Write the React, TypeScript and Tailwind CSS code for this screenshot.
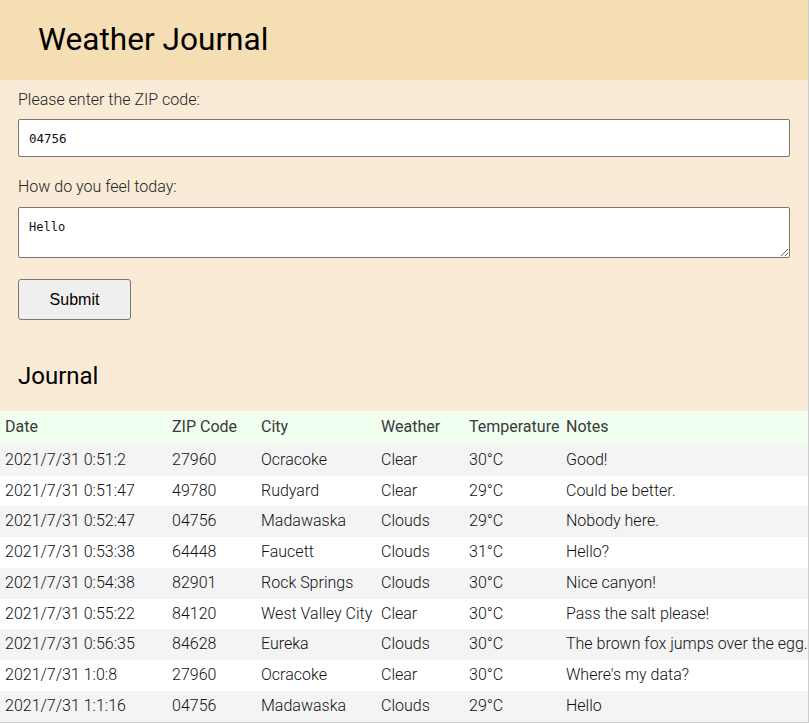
import { useState } from "react"

type Entry = {
  date: string
  zip: string
  city: string
  weather: string
  temp: string
  notes: string
}

const entries: Entry[] = [
  { date: "2021/7/31 0:51:2", zip: "27960", city: "Ocracoke", weather: "Clear", temp: "30°C", notes: "Good!" },
  { date: "2021/7/31 0:51:47", zip: "49780", city: "Rudyard", weather: "Clear", temp: "29°C", notes: "Could be better." },
  { date: "2021/7/31 0:52:47", zip: "04756", city: "Madawaska", weather: "Clouds", temp: "29°C", notes: "Nobody here." },
  { date: "2021/7/31 0:53:38", zip: "64448", city: "Faucett", weather: "Clouds", temp: "31°C", notes: "Hello?" },
  { date: "2021/7/31 0:54:38", zip: "82901", city: "Rock Springs", weather: "Clouds", temp: "30°C", notes: "Nice canyon!" },
  { date: "2021/7/31 0:55:22", zip: "84120", city: "West Valley City", weather: "Clear", temp: "30°C", notes: "Pass the salt please!" },
  { date: "2021/7/31 0:56:35", zip: "84628", city: "Eureka", weather: "Clouds", temp: "30°C", notes: "The brown fox jumps over the egg." },
  { date: "2021/7/31 1:0:8", zip: "27960", city: "Ocracoke", weather: "Clear", temp: "30°C", notes: "Where's my data?" },
  { date: "2021/7/31 1:1:16", zip: "04756", city: "Madawaska", weather: "Clouds", temp: "29°C", notes: "Hello" },
]

const cell = "px-[5px] py-[6px] text-left align-middle leading-[18.75px] whitespace-nowrap"
const head = "px-[5px] pt-[7px] pb-[8px] text-left align-middle leading-[18.75px] whitespace-nowrap font-normal"

export default function App() {
  const [zip, setZip] = useState("04756")
  const [feel, setFeel] = useState("Hello")

  return (
    <div className="min-h-screen w-full bg-white font-['Roboto',sans-serif] text-[16px]">
      <div className="w-[809px] border-r border-b-[3px] border-[#cccccc]">
        {/* Header */}
        <header className="h-[80px] bg-[#f5deb3] px-[38px] pt-[21px]">
          <h1 className="text-[31.6px] leading-[37px] font-normal text-black">Weather Journal</h1>
        </header>

        {/* Form */}
        <section className="bg-[#faebd7] px-[18px] pt-[10px] pb-[21px]">
          <label className="block leading-[19px] font-light text-[#222]">Please enter the ZIP code:</label>
          <input
            value={zip}
            onChange={(e) => setZip(e.target.value)}
            className="mt-[10px] block h-[38px] w-full rounded-[2px] border border-[#767676] bg-white px-[10px] font-['DejaVu_Sans_Mono',monospace] text-[12.5px] text-[#111] outline-none"
          />
          <label className="mt-[20px] block leading-[19px] font-light text-[#222]">How do you feel today:</label>
          <textarea
            value={feel}
            onChange={(e) => setFeel(e.target.value)}
            className="mt-[11px] block h-[51px] w-full rounded-[2px] border border-[#767676] bg-white px-[10px] pt-[11px] pb-[4px] font-['DejaVu_Sans_Mono',monospace] text-[12px] leading-[16px] text-[#111] outline-none"
          />
          <button className="mt-[21px] block h-[41px] w-[113px] rounded-[3px] border border-[#767676] bg-[#efefef] font-['Liberation_Sans',Arial,sans-serif] text-[16px] text-black">
            Submit
          </button>
          <h2 className="mt-[42px] text-[24px] leading-[28px] font-normal text-black">Journal</h2>
        </section>

        {/* Journal table */}
        <table className="w-full table-fixed border-collapse">
          <colgroup>
            <col className="w-[167px]" />
            <col className="w-[89px]" />
            <col className="w-[120px]" />
            <col className="w-[88px]" />
            <col className="w-[97px]" />
            <col />
          </colgroup>
          <thead>
            <tr className="bg-[#f0fff0] text-[#3a3a3a]">
              <th className={head}>Date</th>
              <th className={head}>ZIP Code</th>
              <th className={head}>City</th>
              <th className={head}>Weather</th>
              <th className={head}>Temperature</th>
              <th className={head}>Notes</th>
            </tr>
          </thead>
          <tbody className="font-light text-[#111]">
            {entries.map((e, i) => (
              <tr key={i} className={i % 2 === 0 ? "bg-[#f4f4f4]" : "bg-white"}>
                <td className={cell}>{e.date}</td>
                <td className={cell}>{e.zip}</td>
                <td className={cell}>{e.city}</td>
                <td className={cell}>{e.weather}</td>
                <td className={cell}>{e.temp}</td>
                <td className={`${cell} overflow-visible`}>{e.notes}</td>
              </tr>
            ))}
          </tbody>
        </table>
      </div>
    </div>
  )
}
